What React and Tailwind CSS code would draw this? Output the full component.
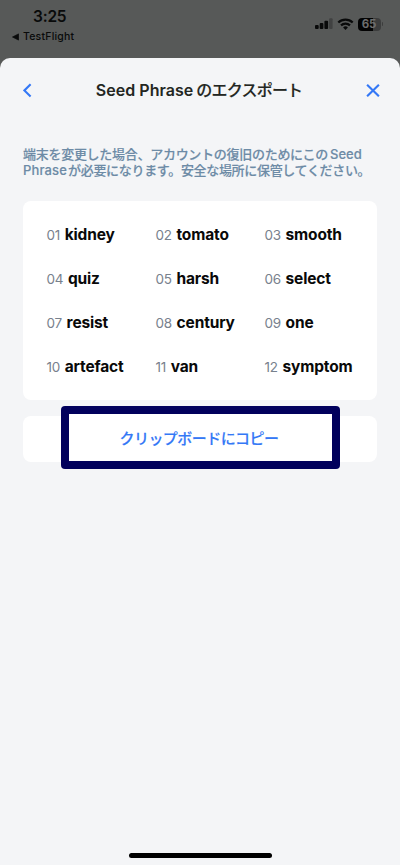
import React from 'react'

const words = [
  'kidney', 'tomato', 'smooth',
  'quiz', 'harsh', 'select',
  'resist', 'century', 'one',
  'artefact', 'van', 'symptom',
]

function StatusBar() {
  return (
    <div className="h-[58px] flex justify-between pl-[12px] pr-[17px] text-[#090a0a]">
      <div className="pt-[7px]">
        <div className="pl-[21px] text-[15.5px] leading-5 font-semibold tracking-[-0.2px]">3:25</div>
        <div className="flex items-center gap-[4px] pt-[3px] text-[10.5px] leading-[14px] font-medium">
          <svg width="7" height="8" viewBox="0 0 7 8" fill="currentColor">
            <path d="M6.5 .9v6.2L.5 4z" stroke="currentColor" strokeWidth=".7" strokeLinejoin="round" />
          </svg>
          <span className="tracking-[0.2px]">TestFlight</span>
        </div>
      </div>
      <div className="flex items-center gap-[4px] h-[14px] mt-[17px]">
        <svg width="18" height="12" viewBox="0 0 18 12" fill="currentColor">
          <rect x="0" y="7" width="3.7" height="4" rx="1" />
          <rect x="4.7" y="5" width="3.7" height="6" rx="1" />
          <rect x="9.4" y="2.8" width="3.7" height="8.2" rx="1" />
          <rect x="14.1" y="0.3" width="3.5" height="10.7" rx="1" fill="#414242" />
        </svg>
        <svg width="17" height="12" viewBox="0 0 17 12" fill="none" stroke="currentColor" strokeWidth="2.2">
          <path d="M1.3 4.5a10.3 10.3 0 0 1 14.4 0" />
          <path d="M4 7.4a6.5 6.5 0 0 1 9 0" />
          <path d="M8.5 11.9 6.1 9.5a3.3 3.3 0 0 1 4.8 0z" fill="currentColor" stroke="none" />
        </svg>
        <div className="flex items-center gap-px">
          <div className="w-[23px] h-[13px] rounded-[4px] bg-linear-to-r from-[#030303] from-65% to-[#3c3d3d] to-65% text-[#6c6d6d] text-[11.5px] leading-[13px] font-bold text-center tracking-[-0.2px]">
            65
          </div>
          <div className="w-[1.5px] h-[4px] rounded-r-full bg-[#3c3d3d]" />
        </div>
      </div>
    </div>
  )
}

export default function App() {
  return (
    <div className="w-[400px] h-[865px] flex flex-col overflow-hidden bg-[#575958] font-['Inter','Noto_Sans_CJK_JP',sans-serif]">
      <StatusBar />
      <main className="flex-1 flex flex-col rounded-t-[10px] bg-[#f4f5f7] px-[23px]">
        <header className="h-[64px] -mr-[3px] flex items-center justify-between">
          <button className="w-3.5 h-4" aria-label="Back">
            <svg width="9" height="16" viewBox="0 0 9 16" fill="none" stroke="#3478f6" strokeWidth="2.1">
              <path d="M7.6 2.2 1.4 8.4l6.2 6.2" />
            </svg>
          </button>
          <h1 className="mr-[5px] flex items-center gap-[3px] text-[16px] font-semibold text-[#232622] whitespace-nowrap">
            <span className="tracking-[0.05px]">Seed Phrase</span>
            <span className="font-medium tracking-[-0.8px] [-webkit-text-stroke:0.15px]">のエクスポート</span>
          </h1>
          <button className="w-3.5 h-4 flex items-center justify-center" aria-label="Close">
            <svg className="shrink-0" width="14" height="14" viewBox="0 0 14 14" fill="none" stroke="#3478f6" strokeWidth="2.1">
              <path d="M1.1 1.7l11.8 11.6M12.9 1.7 1.1 13.3" />
            </svg>
          </button>
        </header>

        <p className="mt-[24px] text-[13px] leading-4 font-medium text-[#6d8ba6] whitespace-nowrap [-webkit-text-stroke:0.15px]">
          <span className="block">
            <span className="tracking-[-0.28px]">端末を変更した場合、アカウントの復旧のためにこの</span>
            <span className="ml-[2px]">Seed</span>
          </span>
          <span className="block">
            <span className="tracking-[0.15px]">Phrase</span>
            <span className="ml-px tracking-[-0.32px]">が必要になります。安全な場所に保管してください。</span>
          </span>
        </p>

        <ol className="mt-[23px] h-[199px] grid grid-cols-[repeat(3,109px)] auto-rows-[44px] rounded-lg bg-white pl-[23.5px] pt-3">
          {words.map((word, i) => (
            <li key={word} className="flex items-baseline gap-[4.5px] leading-[44px] whitespace-nowrap">
              <span className="text-[13.5px] tracking-[-0.15px] text-[#78818d]">{String(i + 1).padStart(2, '0')}</span>
              <span className="text-[15.5px] font-bold tracking-[-0.15px] text-[#090909]">{word}</span>
            </li>
          ))}
        </ol>

        <button className="relative mt-4 w-full h-[46px] rounded-lg bg-white text-[15px] font-medium tracking-[-0.55px] text-[#3478f6]">
          {/* highlight around the copy action */}
          <span className="absolute left-[38px] -top-[10px] w-[279px] h-[63px] rounded-[4px] bg-[#01005c] p-2">
            <span className="block w-full h-full bg-white" />
          </span>
          <span className="relative block pt-px pr-[2px] [-webkit-text-stroke:0.15px]">クリップボードにコピー</span>
        </button>

        <div className="mt-auto mb-[7px] mx-auto w-[143px] h-[5px] rounded-full bg-black" />
      </main>
    </div>
  )
}
